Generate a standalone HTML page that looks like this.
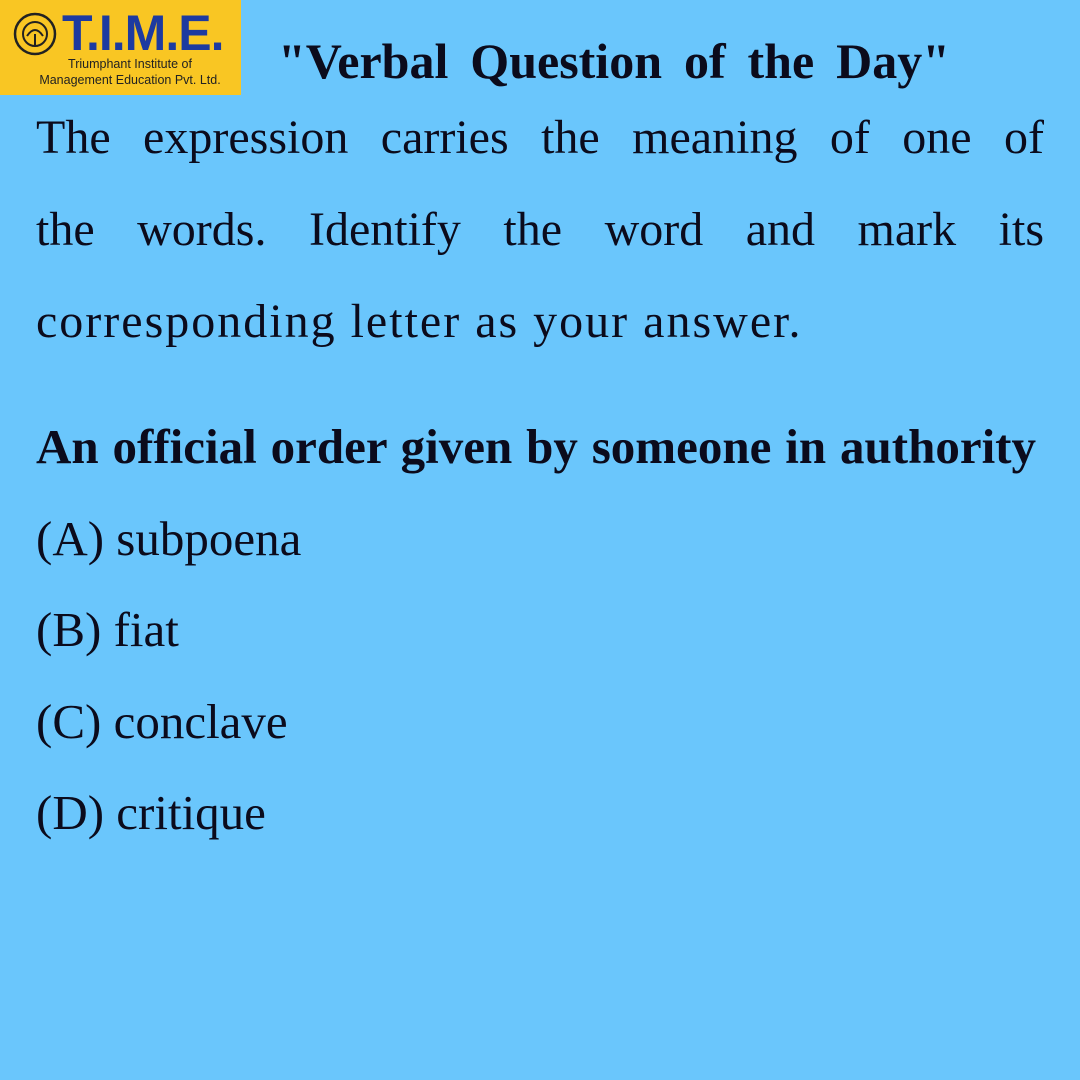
<!DOCTYPE html>
<html><head><meta charset="utf-8"><style>
body{margin:0;width:1080px;height:1080px;background:#6ac6fc;position:relative;overflow:hidden;font-family:"Liberation Serif",serif;color:#0b0b1c}
.logo{position:absolute;left:0;top:0;width:241px;height:95px;background:#f9c623}
.l{position:absolute;left:36px;white-space:nowrap;font-size:48px;line-height:1}
.j{width:1008px;text-align:justify;text-align-last:justify}
.o{font-size:49px}
</style></head><body>
<div class="logo">
<svg width="60" height="60" style="position:absolute;left:10px;top:8px" viewBox="0 0 60 60"><circle cx="25" cy="26" r="20" fill="none" stroke="#222" stroke-width="2.5"/><circle cx="25" cy="26" r="12" fill="none" stroke="#222" stroke-width="2"/><path d="M17 28 Q25 16 33 28" fill="none" stroke="#222" stroke-width="2"/><path d="M25 26 V38" stroke="#222" stroke-width="2"/></svg>
<div style="position:absolute;left:62px;top:4px;font:bold 50px 'Liberation Sans',sans-serif;color:#1d3aa0;letter-spacing:-1px">T.I.M.E.</div>
<div style="position:absolute;left:20px;top:56px;width:220px;text-align:center;font:12.5px/16px 'Liberation Sans',sans-serif;color:#222">Triumphant Institute of<br>Management Education Pvt. Ltd.</div>
</div>
<div style="position:absolute;left:278px;top:36px;font-weight:bold;font-size:50px;line-height:1;white-space:nowrap;width:672px;text-align:justify;text-align-last:justify">"Verbal Question of the Day"</div>
<div class="l j" style="top:114px">The expression carries the meaning of one of</div>
<div class="l j" style="top:206px">the words. Identify the word and mark its</div>
<div class="l" style="top:298px;letter-spacing:2px">corresponding letter as your answer.</div>
<div class="l" style="top:422px;font-weight:bold;font-size:49px;width:1000px;text-align:justify;text-align-last:justify">An official order given by someone in authority</div>
<div class="l o" style="top:514px">(A) subpoena</div>
<div class="l o" style="top:605px">(B) fiat</div>
<div class="l o" style="top:697px">(C) conclave</div>
<div class="l o" style="top:788px">(D) critique</div>
</body></html>
